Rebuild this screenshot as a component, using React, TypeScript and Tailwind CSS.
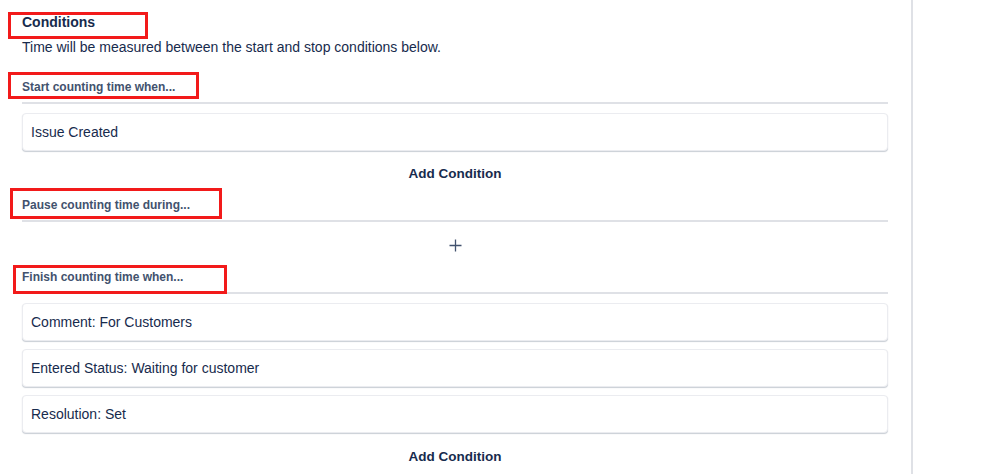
import React from 'react';

const Section: React.FC<{ title: string }> = ({ title }) => (
  <div className="pb-[7px] border-b-2 border-[#dfe1e6]">
    <div className="text-[12px] leading-4 font-bold text-[#42526e]">{title}</div>
  </div>
);

const ConditionCard: React.FC<{ label: string }> = ({ label }) => (
  <div className="h-[38px] flex items-center px-2 bg-white rounded border border-[#ebecf0] shadow-[0_1px_1px_rgba(9,30,66,0.22)] text-[14px]">
    {label}
  </div>
);

const AddCondition: React.FC = () => (
  <div className="text-center text-[13.5px] leading-5 font-bold">Add Condition</div>
);

const Annotation: React.FC<{ className: string }> = ({ className }) => (
  <div className={`absolute border-[3px] border-[#f21a1a] pointer-events-none ${className}`} />
);

export default function App() {
  const finishConditions = ['Comment: For Customers', 'Entered Status: Waiting for customer', 'Resolution: Set'];

  return (
    <div className="relative flex w-[998px] h-[474px] overflow-hidden bg-white text-[#172b4d] font-['Liberation_Sans',Arial,sans-serif]">
      <div className="w-[913px] shrink-0 border-r-2 border-[#dfe1e6] pl-[22px] pr-[23px] pt-[12px]">
        <div className="text-[14px] leading-5 font-bold">Conditions</div>
        <div className="mt-[5px] text-[14px] leading-5">
          Time will be measured between the start and stop conditions below.
        </div>

        {/* Start */}
        <div className="mt-[22px]">
          <Section title="Start counting time when..." />
        </div>
        <div className="mt-[9px]">
          <ConditionCard label="Issue Created" />
        </div>
        <div className="mt-[13px]">
          <AddCondition />
        </div>

        {/* Pause */}
        <div className="mt-[13px]">
          <Section title="Pause counting time during..." />
        </div>
        <div className="h-[47px] flex items-center justify-center text-[#42526e]">
          <svg width="13" height="13" viewBox="0 0 13 13" fill="none" stroke="currentColor" strokeWidth="1.3">
            <path d="M6.5 0.5v12M0.5 6.5h12" />
          </svg>
        </div>

        {/* Finish */}
        <Section title="Finish counting time when..." />
        <div className="mt-[9px] flex flex-col gap-2">
          {finishConditions.map((c) => (
            <ConditionCard key={c} label={c} />
          ))}
        </div>
        <div className="mt-[14px]">
          <AddCondition />
        </div>
      </div>
      <div className="flex-1" />

      {/* screenshot annotations */}
      <Annotation className="left-[8px] top-[12px] w-[140px] h-[27px]" />
      <Annotation className="left-[8px] top-[72px] w-[191px] h-[27px]" />
      <Annotation className="left-[10px] top-[188px] w-[212px] h-[31px]" />
      <Annotation className="left-[13px] top-[265px] w-[214px] h-[29px]" />
    </div>
  );
}
